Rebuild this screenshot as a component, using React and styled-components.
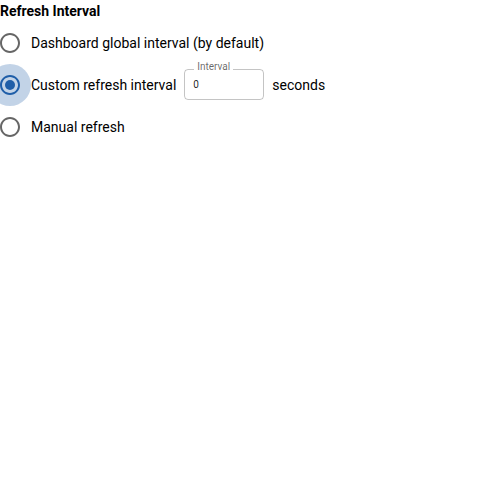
import React, { useState } from "react";
import styled, { createGlobalStyle } from "styled-components";

const Global = createGlobalStyle`
  html, body { margin: 0; padding: 0; background: #fff; }
  body { font-family: Roboto, "Noto Sans", sans-serif; color: rgba(0,0,0,0.87); }
`;

const Wrapper = styled.div`
  display: flex;
  flex-direction: column;
  padding-top: 1px;
`;

const Title = styled.div`
  font-size: 14px;
  font-weight: 700;
  line-height: 21px;
  height: 21px;
  color: #000;
`;

const Group = styled.div`
  display: flex;
  flex-direction: column;
`;

const Row = styled.label`
  display: flex;
  align-items: center;
  height: 42px;
  margin-left: -11px;
  cursor: pointer;
`;

const RadioBox = styled.span`
  position: relative;
  width: 42px;
  height: 42px;
  display: flex;
  align-items: center;
  justify-content: center;
  flex-shrink: 0;
  border-radius: 50%;
  background: ${(p) => (p.$focus ? "rgba(31, 94, 168, 0.27)" : "transparent")};
  color: ${(p) => (p.$checked ? "#1f5ea8" : "rgba(0,0,0,0.6)")};
  svg { width: 24px; height: 24px; display: block; }
`;

const LabelText = styled.span`
  font-size: 14px;
  line-height: 20px;
  letter-spacing: 0;
  color: #000;
`;

const Field = styled.div`
  position: relative;
  top: -1px;
  margin: 0 8px;
  padding: 0 8px;
  width: 80px;
  height: 31px;
  box-sizing: border-box;
  border: 1px solid rgba(0,0,0,0.23);
  border-radius: 4px;
  display: flex;
  align-items: center;
`;

const FloatLabel = styled.span`
  position: absolute;
  top: -9px;
  left: 9px;
  font-size: 10px;
  line-height: 12px;
  padding: 0 3px;
  background: #fff;
  color: rgba(0,0,0,0.6);
`;

const Input = styled.input`
  border: none;
  outline: none;
  padding: 0;
  margin: 0;
  width: 100%;
  font-family: Roboto, sans-serif;
  font-size: 10px;
  color: rgba(0,0,0,0.87);
  background: transparent;
`;

const Radio = ({ checked, focus }) => (
  <RadioBox $checked={checked} $focus={focus}>
    <svg viewBox="0 0 24 24" fill="currentColor">
      <path d="M12 2C6.48 2 2 6.48 2 12s4.48 10 10 10 10-4.48 10-10S17.52 2 12 2zm0 18c-4.42 0-8-3.58-8-8s3.58-8 8-8 8 3.58 8 8-3.58 8-8 8z" />
      {checked && <circle cx="12" cy="12" r="5" />}
    </svg>
  </RadioBox>
);

export default function App() {
  const [value, setValue] = useState("custom");
  const [interval, setInterval] = useState("0");
  return (
    <>
      <Global />
      <Wrapper>
        <Title>Refresh Interval</Title>
        <Group>
          <Row onClick={() => setValue("global")}>
            <Radio checked={value === "global"} />
            <LabelText>Dashboard global interval (by default)</LabelText>
          </Row>
          <Row onClick={() => setValue("custom")}>
            <Radio checked={value === "custom"} focus={value === "custom"} />
            <LabelText>Custom refresh interval</LabelText>
            <Field>
              <FloatLabel>Interval</FloatLabel>
              <Input value={interval} onChange={(e) => setInterval(e.target.value)} />
            </Field>
            <LabelText>seconds</LabelText>
          </Row>
          <Row onClick={() => setValue("manual")}>
            <Radio checked={value === "manual"} />
            <LabelText>Manual refresh</LabelText>
          </Row>
        </Group>
      </Wrapper>
    </>
  );
}
